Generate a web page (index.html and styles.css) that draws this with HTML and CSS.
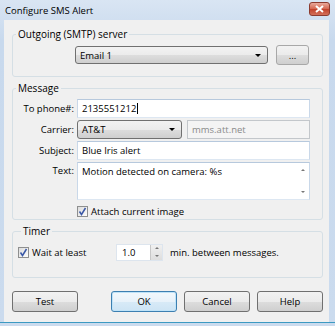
FILE: index.html
```html
<!DOCTYPE html>
<html lang="en">
<head>
  <meta charset="UTF-8" />
  <title>Configure SMS Alert</title>
  <link rel="stylesheet" href="styles.css">
</head>
<body>
  <div class="window">
    <!-- TITLE BAR -->
    <div class="titlebar">
      <span class="title">Configure SMS Alert</span>
      <span class="close-btn">
        <svg width="9" height="8" viewBox="0 0 9 8"><path d="M1 1 L8 7 M8 1 L1 7" stroke="#fff" stroke-width="2"/></svg>
      </span>
    </div>

    <div class="client">
      <!-- SMTP -->
      <fieldset class="group group-smtp">
        <legend>Outgoing (SMTP) server</legend>
        <div class="smtp-row">
          <div class="combo combo-email">Email 1<span class="arrow"></span></div>
          <button class="btn btn-dots">...</button>
        </div>
      </fieldset>

      <!-- MESSAGE -->
      <fieldset class="group group-message">
        <legend>Message</legend>
        <div class="msg-grid">
          <label>To phone#:</label>
          <div class="field">2135551212<span class="caret"></span></div>

          <label>Carrier:</label>
          <div class="carrier-row">
            <div class="combo combo-carrier">AT&amp;T<span class="arrow"></span></div>
            <div class="field field-disabled">mms.att.net</div>
          </div>

          <label>Subject:</label>
          <div class="field">Blue Iris alert</div>

          <label class="label-top">Text:</label>
          <div class="field field-text">
            <span class="text-value">Motion detected on camera: %s</span>
            <span class="scrollbar"><span class="sb-up"></span><span class="sb-down"></span></span>
          </div>

          <span></span>
          <div class="check-row">
            <span class="checkbox"><svg width="9" height="9" viewBox="0 0 9 9"><path d="M1.5 4.5 L3.5 7.5 L7.5 1" fill="none" stroke="#3a58a6" stroke-width="1.5"/></svg></span>
            Attach current image
          </div>
        </div>
      </fieldset>

      <!-- TIMER -->
      <fieldset class="group group-timer">
        <legend>Timer</legend>
        <div class="timer-row">
          <span class="check-row wait-label">
            <span class="checkbox"><svg width="9" height="9" viewBox="0 0 9 9"><path d="M1.5 4.5 L3.5 7.5 L7.5 1" fill="none" stroke="#3a58a6" stroke-width="1.5"/></svg></span>
            Wait at least
          </span>
          <div class="spin">
            <span class="spin-value">1.0</span>
            <span class="spin-btns"><span class="sb-up"></span><span class="sb-down"></span></span>
          </div>
          <span>min. between messages.</span>
        </div>
      </fieldset>

      <!-- BUTTONS -->
      <div class="button-row">
        <button class="btn btn-dialog">Test</button>
        <div class="button-group">
          <button class="btn btn-dialog btn-default">OK</button>
          <button class="btn btn-dialog">Cancel</button>
          <button class="btn btn-dialog">Help</button>
        </div>
      </div>
    </div>
    <div class="frame-bottom"></div>
  </div>
</body>
</html>
```

FILE: styles.css
```css
/* GLOBAL */
body { margin:0; padding:0; background:#cfdeef; font-family:"Open Sans", "Noto Sans", sans-serif; font-size:9.5px; color:#000; }
.window { width:335px; height:326px; display:flex; flex-direction:column; background:linear-gradient(#d9e5f3, #c8d9ed 40px, #cbdbee); }

/* TITLE BAR */
.titlebar { height:20px; flex:none; display:flex; align-items:center; justify-content:space-between; padding:0 5px 0 5px; }
.title { font-size:9.5px; }
.close-btn { width:19px; height:12px; margin-top:-2px; display:flex; align-items:center; justify-content:center;
  border:1px solid #8c3b2f; border-radius:3px; background:linear-gradient(#e9a99b, #d4654f 50%, #c2412a 51%, #d2705a); }

/* CLIENT */
.client { flex:none; height:302px; margin:0 6px 0 4px; padding:0 6px 0 8px; background:#f0f0f0; box-sizing:border-box; }
.frame-bottom { flex:1; border-top:1px solid #3c9ac2; }

/* GROUP BOXES */
.group { margin:0; padding:0; border:1px solid #d5dfe5; border-radius:3px; min-width:0; }
.group legend { padding:0 2px; margin-left:3px; line-height:16px; font-size:10px; }
.group-smtp { margin-top:6px; padding:3px 13px 11px 0; }
.group-message { margin-top:3px; padding:3px 0 1px 0; }
.group-timer { margin-top:3px; padding:4px 0 16px 5px; }

.smtp-row { display:flex; justify-content:flex-end; align-items:center; gap:8px; height:20px; }

/* COMBOS & BUTTONS */
.combo, .btn { box-sizing:border-box; border:1px solid #707070; border-radius:3px; font:inherit; color:#000;
  background:linear-gradient(#f2f2f2, #ebebeb 50%, #dddddd 51%, #cfcfcf); }
.combo { position:relative; display:flex; align-items:center; padding-left:4px; height:18px; }
.combo .arrow { position:absolute; right:6px; top:7px; border-left:3px solid transparent; border-right:3px solid transparent; border-top:3px solid #000; }
.combo-email { width:193px; }
.btn { padding:0; height:20px; }
.btn-dots { width:33px; border-color:#a8a8a8; }

/* MESSAGE GRID */
.msg-grid { display:grid; grid-template-columns:61px 233px; column-gap:3px; row-gap:2px; grid-template-rows:19px 19px 19px 38px 16px; }
.msg-grid label { text-align:right; align-self:center; }
.msg-grid .label-top { align-self:start; padding-top:2px; }
.field { box-sizing:border-box; display:flex; align-items:center; padding-left:4px; background:#fff;
  border:1px solid; border-color:#b7c9dd #c9d8e9 #dde7f2 #c9d8e9; }
.caret { width:1px; height:11px; background:#000; margin-left:1px; }
.carrier-row { display:flex; gap:5px; }
.combo-carrier { width:105px; height:19px; }
.field-disabled { flex:1; background:#f4f4f4; border-color:#c3c7cb; color:#8a8a8a; }
.field-text { align-items:flex-start; justify-content:space-between; padding-top:2px; position:relative; }
.scrollbar { width:12px; height:34px; margin-top:-1px; display:flex; flex-direction:column; justify-content:space-between; align-items:center; padding:5px 0; box-sizing:border-box; }
.sb-up { border-left:2px solid transparent; border-right:2px solid transparent; border-bottom:2px solid #777; }
.sb-down { border-left:2px solid transparent; border-right:2px solid transparent; border-top:2px solid #777; }

/* CHECKBOXES */
.check-row { display:flex; align-items:center; gap:3px; margin-top:3px; }
.checkbox { width:9px; height:9px; display:flex; align-items:center; justify-content:center;
  border:1px solid #8e8f8f; background:linear-gradient(135deg, #dcdcdc, #fdfdfd); }

/* TIMER */
.timer-row { display:flex; align-items:center; height:18px; }
.wait-label { width:98px; margin-top:0; }
.spin { width:47px; height:17px; display:flex; box-sizing:border-box; background:#fff; border:1px solid #dde5ee; margin-right:7px; }
.spin-value { flex:1; padding-left:5px; line-height:15px; }
.spin-btns { width:11px; display:flex; flex-direction:column; justify-content:space-around; align-items:center;
  background:linear-gradient(#f0f0f0, #dedede); border-left:1px solid #c8c8c8; }

/* DIALOG BUTTONS */
.button-row { display:flex; justify-content:space-between; margin-top:13px; }
.button-group { display:flex; gap:7px; }
.btn-dialog { width:66px; height:21px; }
.btn-default { border-color:#3c7fb1; box-shadow:inset 0 0 0 1px #bfe3f8; background:linear-gradient(#f2f8fc, #e8f2fa 50%, #d8eaf7 51%, #cde4f4); }
```
